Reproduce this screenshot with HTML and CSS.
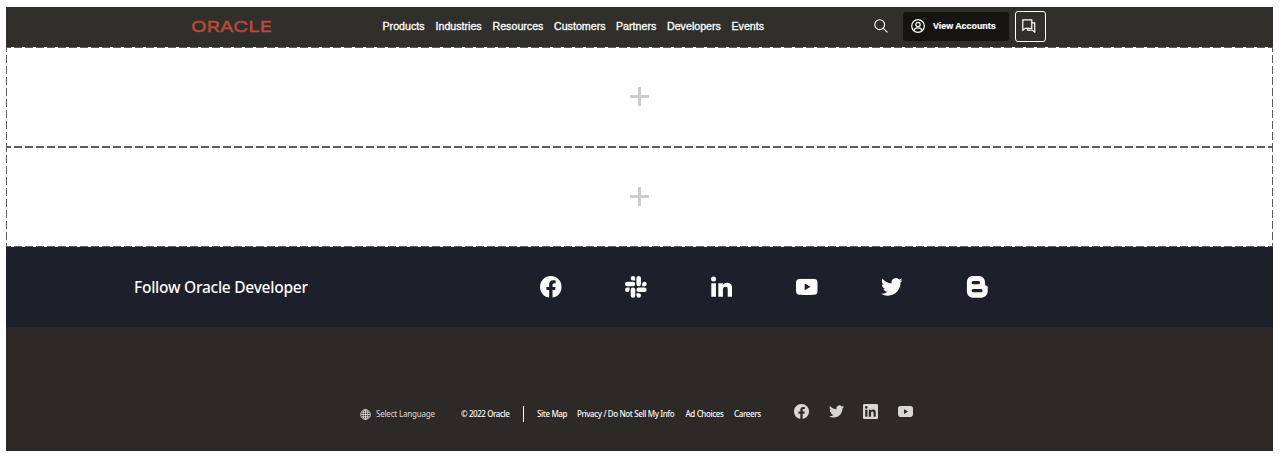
FILE: index.html
```html
<!DOCTYPE html>
<html lang="en">
<head>
<meta charset="utf-8">
<title>Oracle Developer</title>
<link rel="stylesheet" href="styles.css">
</head>
<body>
<svg class="defs" width="0" height="0" aria-hidden="true">
  <symbol id="facebook" viewBox="0 0 24 24"><path d="M24 12.073C24 5.446 18.627.073 12 .073S0 5.446 0 12.073c0 5.990 4.388 10.954 10.125 11.854v-8.385H7.078v-3.469h3.047V9.430c0-3.007 1.792-4.669 4.533-4.669 1.312 0 2.686.235 2.686.235v2.953H15.830c-1.491 0-1.956.925-1.956 1.874v2.250h3.328l-.532 3.469h-2.796v8.385C19.612 23.027 24 18.062 24 12.073z"/></symbol>
  <symbol id="twitter" viewBox="0 0 24 24"><path d="M23.953 4.570a10 10 0 0 1-2.825.775 4.958 4.958 0 0 0 2.163-2.723c-.951.555-2.005.959-3.127 1.184a4.920 4.920 0 0 0-8.384 4.482C7.690 8.095 4.067 6.130 1.640 3.162a4.822 4.822 0 0 0-.666 2.475c0 1.710.87 3.213 2.188 4.096a4.904 4.904 0 0 1-2.228-.616v.06a4.923 4.923 0 0 0 3.946 4.827 4.996 4.996 0 0 1-2.212.085 4.936 4.936 0 0 0 4.604 3.417 9.867 9.867 0 0 1-6.102 2.105c-.39 0-.779-.023-1.170-.067a13.995 13.995 0 0 0 7.557 2.209c9.053 0 13.998-7.496 13.998-13.985 0-.21 0-.42-.015-.63A9.935 9.935 0 0 0 24 4.590z"/></symbol>
  <symbol id="youtube" viewBox="0 0 24 18"><path fill-rule="evenodd" d="M4 .3C8 0 16 0 20 .3c2.800.2 4 1.700 4 4.200v9c0 2.500-1.200 4-4 4.200-4 .3-12 .3-16 0-2.800-.2-4-1.700-4-4.200v-9C0 2 1.200.5 4 .3zM9.600 5.200v7.600l6.500-3.800z"/></symbol>
</svg>
<div class="page">
  <header class="header">
    <svg class="logo" viewBox="0 0 82 14" role="img" aria-label="Oracle"><text x="0" y="12.500" textLength="81" lengthAdjust="spacingAndGlyphs">ORACLE</text></svg>
    <nav class="nav">
      <a>Products</a><a>Industries</a><a>Resources</a><a>Customers</a><a>Partners</a><a>Developers</a><a>Events</a>
    </nav>
    <svg class="search" viewBox="0 0 14 14"><circle cx="5.700" cy="5.700" r="4.900"/><path d="M9.300 9.300 13.400 13.400"/></svg>
    <a class="account">
      <svg class="user" viewBox="0 0 14 14"><circle cx="7" cy="7" r="6.300"/><circle cx="7" cy="5.500" r="2.200"/><path d="M3.200 11.600c.2-2 1.300-2.700 3.800-2.700s3.600.7 3.800 2.700"/></svg>
      <span>View Accounts</span>
    </a>
    <a class="chat"><svg viewBox="0 0 14 14"><path d="M.8.800h9v8.500H3.300L.8 11.300z"/><path d="M9.800 3.800h2.900v9.300l-2.500-2H5.500V9.300"/></svg></a>
  </header>
  <main>
    <section class="slot"><span class="plus"></span></section>
    <section class="slot"><span class="plus"></span></section>
  </main>
  <section class="follow">
    <h2>Follow Oracle Developer</h2>
    <div class="social">
      <svg viewBox="0 0 24 24"><use href="#facebook"/></svg>
      <svg viewBox="0 0 24 24"><path d="M5.042 15.165a2.528 2.528 0 0 1-2.520 2.523A2.528 2.528 0 0 1 0 15.165a2.527 2.527 0 0 1 2.522-2.520h2.520v2.520zM6.313 15.165a2.527 2.527 0 0 1 2.521-2.520 2.527 2.527 0 0 1 2.521 2.520v6.313A2.528 2.528 0 0 1 8.834 24a2.528 2.528 0 0 1-2.521-2.522v-6.313zM8.834 5.042a2.528 2.528 0 0 1-2.521-2.520A2.528 2.528 0 0 1 8.834 0a2.528 2.528 0 0 1 2.521 2.522v2.520H8.834zM8.834 6.313a2.528 2.528 0 0 1 2.521 2.521 2.528 2.528 0 0 1-2.521 2.521H2.522A2.528 2.528 0 0 1 0 8.834a2.528 2.528 0 0 1 2.522-2.521h6.312zM18.956 8.834a2.528 2.528 0 0 1 2.522-2.521A2.528 2.528 0 0 1 24 8.834a2.528 2.528 0 0 1-2.522 2.521h-2.522V8.834zM17.688 8.834a2.528 2.528 0 0 1-2.523 2.521 2.527 2.527 0 0 1-2.520-2.521V2.522A2.527 2.527 0 0 1 15.165 0a2.528 2.528 0 0 1 2.523 2.522v6.312zM15.165 18.956a2.528 2.528 0 0 1 2.523 2.522A2.528 2.528 0 0 1 15.165 24a2.527 2.527 0 0 1-2.520-2.522v-2.522h2.520zM15.165 17.688a2.527 2.527 0 0 1-2.520-2.523 2.526 2.526 0 0 1 2.520-2.520h6.313A2.527 2.527 0 0 1 24 15.165a2.528 2.528 0 0 1-2.522 2.523h-6.313z"/></svg>
      <svg viewBox="0 0 24 24"><circle cx="2.800" cy="3.400" r="2.800"/><path d="M.3 8h5.200v15H.3zM8.100 8h5v2.100c1-1.700 2.500-2.500 4.500-2.500 4.700 0 6.100 3 6.100 7V23h-5.200v-7.400c0-1.900 0-3.800-2.400-3.800S13.200 13.600 13.200 15.500V23H8.100z"/></svg>
      <svg viewBox="0 0 24 24"><use href="#youtube" x="0" y="3" width="24" height="18"/></svg>
      <svg viewBox="0 0 24 24"><use href="#twitter"/></svg>
      <svg viewBox="0 0 24 24"><path fill-rule="evenodd" d="M7.500 0h6.700c4 0 6.800 3 6.800 7v2.200c0 1 .5 1.500 1.400 1.500 1 0 1.600.5 1.600 1.600v4.700c0 4-3 7-7 7H7.500c-4 0-6.500-3-6.500-7V7c0-4 2.500-7 6.500-7zM8 5.600a1.800 1.800 0 0 0 0 3.600h5.700a1.800 1.800 0 0 0 0-3.600zM8 14.500a1.800 1.800 0 0 0 0 3.600h8.500a1.800 1.800 0 0 0 0-3.600z"/></svg>
    </div>
  </section>
  <footer class="footer">
    <svg class="globe" viewBox="0 0 12 12"><circle cx="6" cy="6" r="5.300"/><ellipse cx="6" cy="6" rx="2.500" ry="5.300"/><path d="M6 1v10M1 6h10M1.700 3.500h8.600M1.700 8.500h8.600"/></svg>
    <span class="language">Select Language</span>
    <span class="copyright">© 2022 Oracle</span>
    <div class="links"><a>Site Map</a><a class="privacy">Privacy / Do Not Sell My Info</a><a>Ad Choices</a><a>Careers</a></div>
    <div class="mini">
      <svg viewBox="0 0 24 24"><use href="#facebook"/></svg>
      <svg viewBox="0 0 24 24"><use href="#twitter"/></svg>
      <svg viewBox="0 0 24 24"><path fill-rule="evenodd" d="M1.800 0h20.400Q24 0 24 1.800v20.400q0 1.800-1.800 1.800H1.800Q0 24 0 22.200V1.800Q0 0 1.800 0zM3.600 9v11.400h3.500V9zM5.300 3.300a2.100 2.100 0 1 0 0 4.200 2.100 2.100 0 0 0 0-4.200zM9.300 9v11.400h3.600v-5.600c0-1.500.3-2.900 2.100-2.900s1.900 1.700 1.900 3v5.500h3.500v-6.300c0-3.100-.7-5.400-4.300-5.400-1.700 0-2.800.9-3.300 1.800V9z"/></svg>
      <svg viewBox="0 0 24 24"><use href="#youtube" x="0" y="3" width="24" height="18"/></svg>
    </div>
  </footer>
</div>
</body>
</html>
```
FILE: styles.css
```css
* { box-sizing: border-box; }
body { margin: 0; padding: 7px 7px 10px 6px; background: #fff; overflow: hidden; }
.defs { display: block; }
.page { width: 1267px; font-family: "Noto Sans", sans-serif; }
.header { display: flex; align-items: center; height: 40px; padding: 0 0 1.5px 185px; background: #312f2b; color: #fff; font-family: "Liberation Sans", Arial, sans-serif; }
.logo { width: 82px; height: 14px; flex: none; fill: #b84b38; font: 15px Inter, sans-serif; stroke: #b84b38; stroke-width: .4; overflow: visible; }
.nav { display: grid; grid-template-columns: 53px 57px 61.5px 62px 51px 64.5px 34px; margin-left: 109.5px; font-size: 10.67px; line-height: 14px; -webkit-text-stroke: .3px #fff; }
.search { width: 14px; height: 14px; margin-left: 108.5px; fill: none; stroke: #fff; stroke-width: 1.1; flex: none; }
.account { display: flex; align-items: center; width: 106px; height: 29px; margin-left: 15px; padding-left: 8px; gap: 8px; border-radius: 3px; background: #151411; font-size: 8.9px; font-weight: 700; white-space: nowrap; flex: none; }
.account span { -webkit-text-stroke: .2px #fff; }
.user { width: 14px; height: 14px; fill: none; stroke: #fff; stroke-width: 1.2; }
.chat { display: flex; align-items: center; width: 31px; height: 31px; margin-left: 6px; padding-left: 6px; border: 1px solid #fff; border-radius: 3px; flex: none; }
.chat svg { width: 14px; height: 14px; fill: none; stroke: #fff; stroke-width: 1.2; }
.slot { display: flex; align-items: center; justify-content: center; height: 100px; background:
  repeating-linear-gradient(90deg, #5d5b5c 0 5px, transparent 5px 8px, #5d5b5c 8px 11px) top / 100% 1px no-repeat,
  repeating-linear-gradient(90deg, #5d5b5c 0 5px, transparent 5px 8px, #5d5b5c 8px 11px) bottom / 100% 1px no-repeat,
  repeating-linear-gradient(#5d5b5c 0 5px, transparent 5px 8px, #5d5b5c 8px 11px) left / 1px 100% no-repeat,
  repeating-linear-gradient(#5d5b5c 0 5px, transparent 5px 8px, #5d5b5c 8px 11px) right / 1px 100% no-repeat; }
.plus { width: 19px; height: 19px; margin-bottom: 1px; background: linear-gradient(#cfccc7, #cfccc7) center / 3px 100% no-repeat, linear-gradient(#cfccc7, #cfccc7) center / 100% 3px no-repeat; }
.follow { display: flex; align-items: center; height: 80px; padding-left: 128px; background: #1d1f2b; color: #fcfbfa; }
h2 { width: 406px; margin: 0; font-size: 17px; line-height: 24px; font-weight: 500; letter-spacing: -.3px; white-space: nowrap; transform: scaleX(.915); transform-origin: left; }
.social { display: flex; gap: 63.6px; }
.social svg { width: 21.7px; height: 21.7px; fill: #fcfbfa; }
.footer { display: flex; align-items: center; height: 124px; padding: 50px 0 0 354px; background: #2d2926; color: #fcfbfa; font-size: 8px; line-height: 12px; white-space: nowrap; }
.globe { width: 11px; height: 11px; margin-right: 5px; fill: none; stroke: #fff; stroke-width: .75; flex: none; }
.language { width: 85px; color: #dedbd8; letter-spacing: -.2px; flex: none; }
.copyright { display: flex; align-items: center; width: 63px; height: 16px; border-right: 1px solid #fff; font-weight: 500; letter-spacing: -.42px; flex: none; }
.links { display: grid; grid-template-columns: 40px 108.5px 48.5px 60px; margin-left: 13px; font-weight: 500; letter-spacing: -.38px; }
.mini { display: flex; gap: 19.7px; margin-bottom: 5px; }
.mini svg { width: 15px; height: 15px; fill: #d9d7d4; }
```
